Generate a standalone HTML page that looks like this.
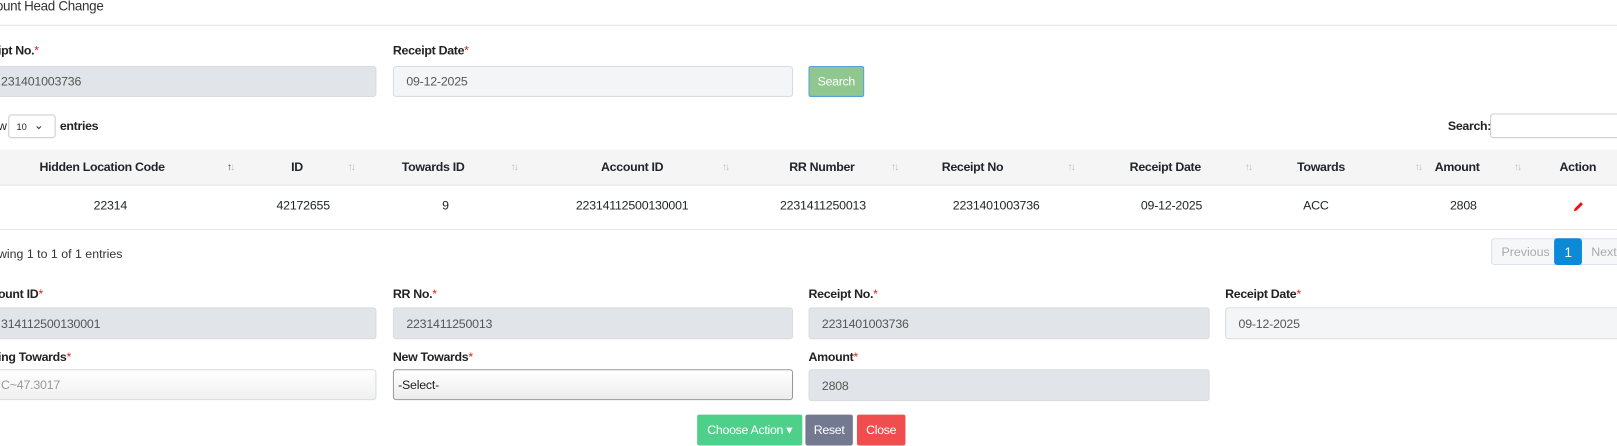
<!DOCTYPE html>
<html><head><meta charset="utf-8"><style>
*{box-sizing:border-box;margin:0;padding:0}
html,body{width:1617px;height:440px;overflow:hidden;background:#fff}
#w{position:absolute;left:0;top:0;width:1568px;height:427px;transform:scale(1.03125);transform-origin:0 0;font-family:"Liberation Sans",sans-serif;font-size:12px;color:#212529}
.a{position:absolute;white-space:nowrap}
.lbl{font-weight:bold;font-size:12px;letter-spacing:-0.3px;color:#222}
.lbl i{color:#e02020;font-style:normal;font-weight:normal}
.inp{position:absolute;border:1px solid #d8dce0;border-radius:3px;background:#e1e4e8;padding:0 12px;display:flex;align-items:center;font-size:12px;color:#555;letter-spacing:-0.2px}
.th{font-weight:bold;letter-spacing:-0.3px;top:155px;transform:translateX(-50%)}
.td{top:192px;transform:translateX(-50%);letter-spacing:-0.2px}
.ar{top:157px;color:#bbb;font-size:10px;letter-spacing:-2px}
.btn{position:absolute;color:#fff;display:flex;align-items:center;justify-content:center;font-size:12px;letter-spacing:-0.3px;border-radius:2px}
</style></head><body><div id="w">
<div class="a" style="left:-4px;top:-2px;font-size:13px;color:#333;letter-spacing:-0.3px">ount Head Change</div>
<div class="a" style="left:0;top:24px;width:1617px;height:1px;background:#e6e6e6"></div>

<div class="a lbl" style="left:-2px;top:42px">ipt No.<i>*</i></div>
<div class="a lbl" style="left:381px;top:42px">Receipt Date<i>*</i></div>
<div class="inp" style="left:-12px;top:64px;width:377px;height:30px">231401003736</div>
<div class="inp" style="left:381px;top:64px;width:388px;height:30px;background:#f4f5f7">09-12-2025</div>
<div class="btn" style="left:784px;top:64px;width:54px;height:30px;background:#8fc78f;border:1px solid #5aa0d8">Search</div>

<div class="a" style="left:-2px;top:115px;font-size:12px">w</div>
<div class="a" style="left:8px;top:111px;width:46px;height:23px;border:1px solid #ccc;border-radius:3px;font-size:9px;padding:6px 0 0 7px">10 <span style="position:absolute;left:24px;top:3px;font-size:11px">&#8964;</span></div>
<div class="a lbl" style="left:58px;top:115px">entries</div>
<div class="a lbl" style="left:1404px;top:115px">Search:</div>
<div class="a" style="left:1445px;top:110px;width:180px;height:24px;border:1px solid #ccc;border-radius:3px"></div>

<div class="a" style="left:0;top:145px;width:1617px;height:35px;background:#f5f5f5;border-bottom:1px solid #e3e3e3"></div>
<div class="a th" style="left:99px">Hidden Location Code</div><div class="a ar" style="left:220px;color:#333">↑<span style="color:#bbb">↓</span></div>
<div class="a th" style="left:288px">ID</div><div class="a ar" style="left:337px">↑↓</div>
<div class="a th" style="left:420px">Towards ID</div><div class="a ar" style="left:495px">↑↓</div>
<div class="a th" style="left:613px">Account ID</div><div class="a ar" style="left:700px">↑↓</div>
<div class="a th" style="left:797px">RR Number</div><div class="a ar" style="left:864px">↑↓</div>
<div class="a th" style="left:943px">Receipt No</div><div class="a ar" style="left:1035px">↑↓</div>
<div class="a th" style="left:1130px">Receipt Date</div><div class="a ar" style="left:1207px">↑↓</div>
<div class="a th" style="left:1281px">Towards</div><div class="a ar" style="left:1372px">↑↓</div>
<div class="a th" style="left:1413px">Amount</div><div class="a ar" style="left:1468px">↑↓</div>
<div class="a th" style="left:1530px">Action</div>

<div class="a td" style="left:107px">22314</div>
<div class="a td" style="left:294px">42172655</div>
<div class="a td" style="left:432px">9</div>
<div class="a td" style="left:613px">22314112500130001</div>
<div class="a td" style="left:798px">2231411250013</div>
<div class="a td" style="left:966px">2231401003736</div>
<div class="a td" style="left:1136px">09-12-2025</div>
<div class="a td" style="left:1276px">ACC</div>
<div class="a td" style="left:1419px">2808</div>
<svg class="a" style="left:1525px;top:195px" width="11" height="11" viewBox="0 0 11 11"><path d="M1 10 L2 7 L8 1 L10 3 L4 9 Z" fill="#f01010"/></svg>
<div class="a" style="left:0;top:222px;width:1617px;height:1px;background:#e6e6e6"></div>

<div class="a" style="left:-2px;top:239px;color:#333">wing 1 to 1 of 1 entries</div>
<div class="a" style="left:1446px;top:231px;width:180px;height:26px;border:1px solid #dde;border-radius:3px;background:#f6f7f9"></div>
<div class="a" style="left:1456px;top:237px;color:#aaa">Previous</div>
<div class="btn" style="left:1507px;top:231px;width:27px;height:26px;background:#0b8ad8;border-radius:3px;font-size:13px">1</div>
<div class="a" style="left:1543px;top:237px;color:#aaa">Next</div>

<div class="a lbl" style="left:-2px;top:278px">ount ID<i>*</i></div>
<div class="a lbl" style="left:381px;top:278px">RR No.<i>*</i></div>
<div class="a lbl" style="left:784px;top:278px">Receipt No.<i>*</i></div>
<div class="a lbl" style="left:1188px;top:278px">Receipt Date<i>*</i></div>
<div class="inp" style="left:-12px;top:298px;width:377px;height:31px">314112500130001</div>
<div class="inp" style="left:381px;top:298px;width:388px;height:31px">2231411250013</div>
<div class="inp" style="left:784px;top:298px;width:389px;height:31px">2231401003736</div>
<div class="inp" style="left:1188px;top:298px;width:440px;height:31px;background:#f4f5f7">09-12-2025</div>

<div class="a lbl" style="left:-2px;top:339px">ing Towards<i>*</i></div>
<div class="a lbl" style="left:381px;top:339px">New Towards<i>*</i></div>
<div class="a lbl" style="left:784px;top:339px">Amount<i>*</i></div>
<div class="inp" style="left:-12px;top:358px;width:377px;height:30px;background:linear-gradient(#fff,#f0f0f0);color:#999">C~47.3017</div>
<div class="inp" style="left:381px;top:358px;width:388px;height:30px;background:linear-gradient(#fff,#ececec);border-color:#999;color:#222;padding-left:4px">-Select-</div>
<div class="inp" style="left:784px;top:358px;width:389px;height:31px">2808</div>

<div class="btn" style="left:676px;top:402px;width:102px;height:30px;background:#4fd08a">Choose Action ▾</div>
<div class="btn" style="left:781px;top:402px;width:46px;height:30px;background:#737a90">Reset</div>
<div class="btn" style="left:831px;top:402px;width:47px;height:30px;background:#f04e4e">Close</div>
</div></body></html>
